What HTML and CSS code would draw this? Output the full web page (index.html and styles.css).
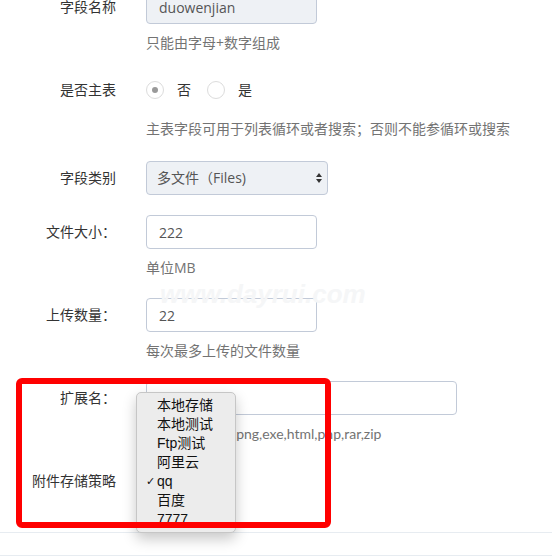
FILE: index.html
```html
<!DOCTYPE html>
<html lang="zh-CN">

<head>
    <meta charset="UTF-8" />
    <meta name="viewport" content="width=device-width, initial-scale=1" />
    <title>字段设置</title>
    <link rel="stylesheet" href="styles.css">
</head>

<body>
    <div class="page">
        <form class="form">
            <div class="group">
                <label class="label">字段名称</label>
                <div class="control">
                    <input class="input input-readonly" type="text" value="duowenjian" readonly />
                    <p class="help">只能由字母+数字组成</p>
                </div>
            </div>

            <div class="group group-radio">
                <label class="label">是否主表</label>
                <div class="control">
                    <div class="radios">
                        <label class="radio"><span class="dot checked"></span>否</label>
                        <label class="radio"><span class="dot"></span>是</label>
                    </div>
                    <p class="help help-radio">主表字段可用于列表循环或者搜索；否则不能参循环或搜索</p>
                </div>
            </div>

            <div class="group">
                <label class="label">字段类别</label>
                <div class="control">
                    <div class="select">
                        <span>多文件（Files)</span>
                        <svg class="arrows" width="8" height="12" viewBox="0 0 8 12">
                            <path d="M4 1 L7 5 H1 Z" fill="#333" />
                            <path d="M4 11 L7 7 H1 Z" fill="#333" />
                        </svg>
                    </div>
                </div>
            </div>

            <div class="group">
                <label class="label">文件大小：</label>
                <div class="control">
                    <input class="input" type="text" value="222" />
                    <p class="help">单位MB</p>
                </div>
            </div>

            <div class="group">
                <label class="label">上传数量：</label>
                <div class="control">
                    <input class="input" type="text" value="22" />
                    <p class="help">每次最多上传的文件数量</p>
                </div>
            </div>

            <div class="group">
                <label class="label">扩展名：</label>
                <div class="control">
                    <input class="input input-wide" type="text" value="jpg" />
                    <p class="help help-ext">jpg,jpeg,gif,ico,png,exe,html,php,rar,zip</p>
                </div>
            </div>

            <div class="group group-last">
                <label class="label">附件存储策略</label>
                <div class="control control-menu">
                    <ul class="menu">
                        <li>本地存储</li>
                        <li>本地测试</li>
                        <li>Ftp测试</li>
                        <li>阿里云</li>
                        <li class="selected">qq</li>
                        <li>百度</li>
                        <li>7777</li>
                    </ul>
                </div>
            </div>
        </form>

        <div class="footer"></div>

        <div class="watermark">www.dayrui.com</div>
        <div class="highlight"></div>
    </div>
</body>

</html>
```

FILE: styles.css
```css
* {
    margin: 0;
    padding: 0;
    box-sizing: border-box;
}

body {
    background-color: #fff;
    color: #333;
    font-family: 'Open Sans', 'Noto Sans CJK SC', sans-serif;
    font-size: 14px;
    line-height: 20px;
    overflow: hidden;
}

.page {
    position: relative;
    display: flow-root;
    height: 557px;
}

.form {
    margin-top: -10px;
}

.group {
    display: grid;
    grid-template-columns: 116px auto;
    column-gap: 30px;
    margin-bottom: 20px;
}

.group-radio {
    margin-bottom: 22px;
}

.group-last {
    margin-bottom: 34px;
}

.label {
    text-align: right;
    padding-top: 7px;
    color: #333;
    white-space: nowrap;
}

.control {
    min-width: 0;
}

.input {
    display: block;
    width: 171px;
    height: 34px;
    padding: 0 12px;
    font-family: 'Open Sans', 'Noto Sans CJK SC', sans-serif;
    font-size: 14px;
    color: #555;
    background-color: #fff;
    border: 1px solid #c2cad8;
    border-radius: 4px;
    outline: none;
}

.input-readonly {
    background-color: #eef1f5;
}

.input-wide {
    width: 311px;
}

.help {
    margin-top: 9px;
    color: #737373;
    white-space: nowrap;
}

.help-radio {
    margin-top: 12px;
}

.help-ext {
    font-family: Lato, 'Noto Sans CJK SC', sans-serif;
}

.radios {
    display: flex;
    align-items: center;
    height: 34px;
}

.radio {
    display: flex;
    align-items: center;
    margin-right: 16px;
    color: #333;
}

.dot {
    position: relative;
    width: 18px;
    height: 18px;
    border: 1px solid #dcdcdc;
    border-radius: 50%;
    margin-right: 13px;
    background: #fff;
}

.dot.checked::after {
    content: "";
    position: absolute;
    left: 5px;
    top: 5px;
    width: 6px;
    height: 6px;
    border-radius: 50%;
    background: #999;
}

.select {
    display: flex;
    align-items: center;
    justify-content: space-between;
    width: 182px;
    height: 34px;
    padding: 0 4px 0 10px;
    color: #555;
    background-color: #eef1f5;
    border: 1px solid #c2cad8;
    border-radius: 4px;
}

.control-menu {
    position: relative;
    height: 34px;
}

.menu {
    list-style: none;
    position: absolute;
    left: -10px;
    top: -72px;
    width: 100px;
    height: 141px;
    padding-top: 3px;
    background: #ececec;
    border: 1px solid #c6c6c6;
    border-radius: 5px;
    box-shadow: 0 6px 14px rgba(0, 0, 0, 0.22);
    overflow: hidden;
    z-index: 5;
}

.menu li {
    position: relative;
    padding-left: 20px;
    height: 19px;
    line-height: 19px;
    font-family: 'Liberation Sans', 'Noto Sans CJK SC', sans-serif;
    font-size: 14px;
    color: #111;
}

.menu li.selected::before {
    content: "✓";
    position: absolute;
    left: 9px;
    top: 0;
    font-family: 'DejaVu Sans', sans-serif;
    font-size: 11px;
}

.footer {
    height: 24px;
    border-top: 1px solid #e7ecf1;
    border-bottom: 1px solid #e7ecf1;
}

.watermark {
    position: absolute;
    left: 160px;
    top: 279px;
    font-family: 'Liberation Sans', sans-serif;
    font-weight: bold;
    font-style: italic;
    font-size: 26px;
    line-height: 30px;
    color: #f5f6f7;
    pointer-events: none;
    z-index: 3;
}

.highlight {
    position: absolute;
    left: 16px;
    top: 378px;
    width: 315px;
    height: 150px;
    border: 6px solid #ff0000;
    border-radius: 6px;
    pointer-events: none;
    z-index: 10;
}
```
